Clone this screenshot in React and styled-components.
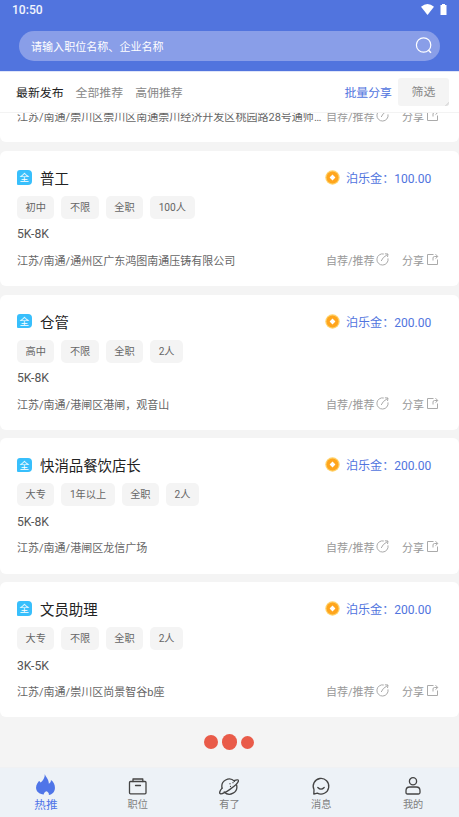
import React, { useState } from "react";
import styled, { createGlobalStyle } from "styled-components";

const jobs = [
  {
    id: 1,
    address: "江苏/南通/崇川区崇川区南通崇川经济开发区桃园路28号通师大厦",
  },
  {
    id: 2,
    title: "普工",
    price: "100.00",
    tags: ["初中", "不限", "全职", "100人"],
    salary: "5K-8K",
    address: "江苏/南通/通州区广东鸿图南通压铸有限公司",
  },
  {
    id: 3,
    title: "仓管",
    price: "200.00",
    tags: ["高中", "不限", "全职", "2人"],
    salary: "5K-8K",
    address: "江苏/南通/港闸区港闸，观音山",
  },
  {
    id: 4,
    title: "快消品餐饮店长",
    price: "200.00",
    tags: ["大专", "1年以上", "全职", "2人"],
    salary: "5K-8K",
    address: "江苏/南通/港闸区龙信广场",
  },
  {
    id: 5,
    title: "文员助理",
    price: "200.00",
    tags: ["大专", "不限", "全职", "2人"],
    salary: "3K-5K",
    address: "江苏/南通/崇川区尚景智谷b座",
  },
];

const tabs = ["最新发布", "全部推荐", "高佣推荐"];

const Icon = ({ size = 20, children }) => (
  <svg
    width={size}
    height={size}
    viewBox="0 0 20 20"
    fill="none"
    stroke="currentColor"
    strokeWidth="1.3"
    strokeLinecap="round"
    strokeLinejoin="round"
  >
    {children}
  </svg>
);

const menu = [
  {
    name: "热推",
    icon: (
      <path
        fill="currentColor"
        stroke="none"
        d="M9.4 0C9.8 2.6 13.2 4.6 13.2 9.2C14.6 8.6 15.2 7.4 15.2 5.8C17.8 7.6 19 10.4 19 13C19 16.8 16.5 19.3 13.2 20C13.6 18.4 12.4 17 10.8 16.4C9.6 17 8.3 18 8.3 19.6C4 19 1 16.5 1 13C1 9.8 2.8 8.4 3.8 6.6C4.7 7 5 7.6 5.4 8.2C7.6 6.4 9.4 3.6 9.4 0Z"
      />
    ),
  },
  {
    name: "职位",
    icon: (
      <>
        <rect x="1.5" y="5.5" width="16.5" height="12.3" rx="1" />
        <path d="M5 5.5V3H14.8V5.5M7.5 9.5H12.5" />
      </>
    ),
  },
  {
    name: "有了",
    icon: (
      <>
        <path d="M3.1 12.2A7.4 7.4 0 0 1 15.5 5.2M17.6 9A7.4 7.4 0 0 1 5.2 16" />
        <path d="M3.1 12.2C.7 15 .1 17 1.2 17.6C3.8 19 18.5 9.2 19.5 5C19.8 3.6 18 3.3 15.1 4.7" />
        <path d="M11 7.7V7.8M14 6.6V6.7M11.5 10.5V10.6" />
      </>
    ),
  },
  {
    name: "消息",
    icon: (
      <>
        <path d="M2.8 18.1L3 13.7A7.8 7.8 0 1 1 6.3 17.1Z" />
        <path d="M6.8 11.5Q10 14.8 13.2 11.5" />
      </>
    ),
  },
  {
    name: "我的",
    icon: (
      <>
        <circle cx="10" cy="5.3" r="3.6" />
        <path d="M6.7 11H13.3Q17 11 17 14.7V16.5Q17 18 15.5 18H4.5Q3 18 3 16.5V14.7Q3 11 6.7 11Z" />
      </>
    ),
  },
];

const App = () => {
  const [tab, setTab] = useState(0);
  const [active, setActive] = useState(0);

  return (
    <Wrapper>
      <GlobalStyle />
      <Header>
        <StatusBar>
          <span>10:50</span>
          <StatusIcons>
            <svg width="13" height="11" viewBox="0 0 13 11">
              <path d="M0 2.7Q6.5-2.5 13 2.7L6.5 11Z" fill="#fff" />
            </svg>
            <svg width="7" height="11" viewBox="0 0 7 11">
              <path d="M2 0H5V1H6.5V11H.5V1H2Z" fill="#fff" />
            </svg>
          </StatusIcons>
        </StatusBar>
        <Search>
          <span>请输入职位名称、企业名称</span>
          <svg width="18" height="18" viewBox="0 0 18 18" fill="none">
            <circle cx="8.6" cy="8" r="7.2" stroke="#fff" strokeWidth="1.2" />
            <path d="M13.3 13L16 15.8" stroke="#fff" strokeWidth="1.5" />
          </svg>
        </Search>
      </Header>
      <Tabs>
        {tabs.map((item, index) => (
          <Tab key={item} $active={tab === index} onClick={() => setTab(index)}>
            {item}
          </Tab>
        ))}
        <BatchShare>批量分享</BatchShare>
        <Filter>筛选</Filter>
      </Tabs>
      <List>
        {jobs.map((job) => (
          <Card key={job.id} $short={!job.title}>
            {job.title && (
              <>
                <TitleRow>
                  <Badge>全</Badge>
                  <Title>{job.title}</Title>
                  <svg width="15" height="15" viewBox="0 0 15 15">
                    <circle cx="7.5" cy="7.5" r="7.2" fill="#ffd26a" />
                    <circle cx="7.5" cy="7.5" r="6" fill="#ffa51c" />
                    <path d="M7.5 4.6L10.4 7.5L7.5 10.4L4.6 7.5Z" fill="#fff" />
                  </svg>
                  <Price>泊乐金：{job.price}</Price>
                </TitleRow>
                <TagRow>
                  {job.tags.map((tag) => (
                    <Tag key={tag}>{tag}</Tag>
                  ))}
                </TagRow>
                <Salary>{job.salary}</Salary>
              </>
            )}
            <BottomRow $short={!job.title}>
              <Address>{job.address}</Address>
              <Action $width="76px">
                自荐/推荐
                <svg width="13" height="13" viewBox="0 0 13 13">
                  <path d="M7.8 1A5.6 5.6 0 1 0 12 5.4M5.2 8Q6.2 4.5 11.8 1.3M8.9.8L12 1L11.5 4" />
                </svg>
              </Action>
              <Action $width="37px">
                分享
                <svg width="13" height="13" viewBox="0 0 13 13">
                  <path d="M7.5 1.5H1.5V11.5H11.5V6.5M7 7.5V5Q7 3.5 8.5 3.5H11.5M9.5 1.2L11.8 3.5L9.5 5.6" />
                </svg>
              </Action>
            </BottomRow>
          </Card>
        ))}
        <Loader>
          <Dot $size="14px" />
          <Dot $size="15.5px" />
          <Dot $size="13px" />
        </Loader>
      </List>
      <Menu>
        {menu.map((item, index) => (
          <MenuItem
            key={item.name}
            $active={active === index}
            onClick={() => setActive(index)}
          >
            <Icon size={active === index ? 21 : 20}>{item.icon}</Icon>
            <span>{item.name}</span>
          </MenuItem>
        ))}
      </Menu>
    </Wrapper>
  );
};

export default App;

const GlobalStyle = createGlobalStyle`
  * {
    box-sizing: border-box;
  }
  body {
    margin: 0;
    font-family: Roboto, "Noto Sans CJK SC", sans-serif;
  }
  svg {
    display: block;
    flex-shrink: 0;
  }
`;
const Wrapper = styled.div`
  height: 100vh;
  display: flex;
  flex-direction: column;
  overflow: hidden;
  background: #f4f4f4;
`;
const Header = styled.div`
  height: 71px;
  flex-shrink: 0;
  background: #5174de;
`;
const StatusBar = styled.div`
  height: 31px;
  padding: 0 12px;
  display: flex;
  justify-content: space-between;
  color: #f1f4fd;
  font-size: 12.1px;
  font-weight: 500;
  line-height: 21px;
`;
const StatusIcons = styled.div`
  display: flex;
  gap: 6px;
  padding-top: 4px;
`;
const Search = styled.div`
  height: 30px;
  margin: 0 19px;
  padding: 0 7px 0 12px;
  display: flex;
  align-items: center;
  justify-content: space-between;
  border-radius: 15px;
  background: #899ee8;
  color: #fff;
  font-size: 11.05px;
`;
const Tabs = styled.div`
  height: 42px;
  flex-shrink: 0;
  padding: 0 10px 1px 16px;
  display: flex;
  align-items: center;
  gap: 12px;
  background: #fff;
  border-top: 1px solid #dfe5f9;
  border-bottom: 1px solid #f3f3f3;
  font-size: 11.9px;
`;
const Tab = styled.span`
  color: ${(props) => (props.$active ? "#222" : "#888")};
`;
const BatchShare = styled.span`
  margin-left: auto;
  margin-right: -6px;
  color: #5174de;
`;
const Filter = styled.div`
  width: 51px;
  height: 28px;
  border-radius: 3px;
  background: linear-gradient(135deg, #f4f4f4 94%, #dedede 94%);
  color: #888;
  line-height: 29px;
  text-align: center;
`;
const List = styled.div`
  flex: 1;
  min-height: 0;
  overflow: hidden;
  display: flex;
  flex-direction: column;
  justify-content: flex-end;
`;
const Card = styled.div`
  height: ${(props) => (props.$short ? "36px" : "135.2px")};
  flex-shrink: 0;
  margin-bottom: 8.55px;
  padding: ${(props) => (props.$short ? "0" : "16.5px")} 20px 0 17px;
  border-radius: ${(props) => (props.$short ? "0 0 6px 6px" : "6px")};
  background: #fff;
`;
const TitleRow = styled.div`
  height: 20px;
  display: flex;
  align-items: center;
`;
const Badge = styled.span`
  width: 14.5px;
  height: 14.5px;
  border-radius: 3px 4px 4px 1px;
  background: #38bffc;
  color: #fff;
  font-size: 9.5px;
  line-height: 15px;
  text-align: center;
`;
const Title = styled.span`
  flex: 1;
  margin-left: 8.5px;
  color: #222;
  font-size: 14.4px;
`;
const Price = styled.span`
  width: 93px;
  margin-left: 6.5px;
  white-space: nowrap;
  color: #5174de;
  font-size: 12.05px;
`;
const TagRow = styled.div`
  display: flex;
  gap: 7px;
  margin-top: 8.5px;
`;
const Tag = styled.span`
  height: 23px;
  padding: 0 8.5px;
  border-radius: 5px;
  background: #f4f4f4;
  color: #666;
  font-size: 10.2px;
  line-height: 23px;
`;
const Salary = styled.div`
  margin-top: 5.5px;
  height: 20px;
  color: #555;
  font-size: 12.2px;
  line-height: 20px;
`;
const BottomRow = styled.div`
  height: 20px;
  margin-top: ${(props) => (props.$short ? "0" : "5.5px")};
  display: flex;
  align-items: center;
  color: #666;
  font-size: 11.02px;
`;
const Address = styled.span`
  flex: 1;
  min-width: 0;
  margin-right: 2px;
  overflow: hidden;
  text-overflow: ellipsis;
  white-space: nowrap;
`;
const Action = styled.span`
  width: ${(props) => props.$width};
  flex-shrink: 0;
  display: flex;
  align-items: center;
  gap: 1.5px;
  color: #999;
  white-space: nowrap;
  svg {
    margin-top: -1px;
    fill: none;
    stroke: #aaa;
    stroke-width: 1;
  }
`;
const Loader = styled.div`
  height: 49.7px;
  flex-shrink: 0;
  margin-top: -8.55px;
  padding-right: 1px;
  display: flex;
  align-items: center;
  justify-content: center;
  gap: 4px;
`;
const Dot = styled.span`
  width: ${(props) => props.$size};
  height: ${(props) => props.$size};
  border-radius: 50%;
  background: #e95b49;
`;
const Menu = styled.div`
  height: 50px;
  flex-shrink: 0;
  display: flex;
  background: #edf2f7;
  border-top: 1px solid #f0f1f3;
`;
const MenuItem = styled.div`
  flex: 1;
  display: flex;
  flex-direction: column;
  align-items: center;
  justify-content: flex-end;
  gap: ${(props) => (props.$active ? "1.5px" : "0")};
  padding-bottom: 3px;
  color: ${(props) => (props.$active ? "#4f75e8" : "#444")};
  span {
    color: ${(props) => (props.$active ? "#4f75e8" : "#808080")};
    font-size: ${(props) => (props.$active ? "11.7px" : "10.2px")};
    line-height: 18px;
  }
`;
